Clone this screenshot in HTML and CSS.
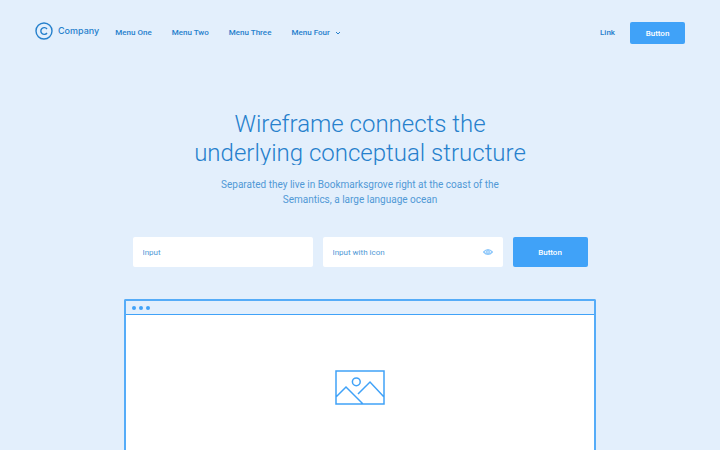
FILE: index.html
```html
<!DOCTYPE html>
<html lang="en">
<head>
<meta charset="utf-8">
<meta name="viewport" content="width=device-width, initial-scale=1">
<title>Company</title>
<link rel="stylesheet" href="styles.css">
</head>
<body>
<header class="header">
  <a class="brand" href="#">
    <svg class="brand-mark" viewBox="0 0 18 18" aria-hidden="true"><circle cx="9" cy="9" r="8"/><path d="M12 7A3.400 3.400 0 1 0 12 11"/></svg>
    <span>Company</span>
  </a>
  <nav class="menu" aria-label="Main">
    <a href="#">Menu One</a>
    <a href="#">Menu Two</a>
    <a href="#">Menu Three</a>
    <a class="menu-drop" href="#">Menu Four
      <svg class="chevron" viewBox="0 0 6 4" aria-hidden="true"><path d="M1 1L3 3L5 1"/></svg></a>
  </nav>
  <div class="actions">
    <a href="#">Link</a>
    <button class="button button-small" type="button">Button</button>
  </div>
</header>
<main class="hero">
  <h1 class="title">Wireframe connects the<br>underlying conceptual structure</h1>
  <p class="lead">Separated they live in Bookmarksgrove right at the coast of the<br>Semantics, a large language ocean</p>
  <form class="form">
    <div class="field"><input type="text" placeholder="Input" aria-label="Input"></div>
    <div class="field">
      <input type="text" placeholder="Input with icon" aria-label="Input with icon">
      <svg class="eye" viewBox="0 0 10 6" aria-hidden="true"><path d="M.6 3Q5-1.600 9.400 3Q5 7.600 .6 3Z"/><circle cx="5" cy="3" r="1.300"/></svg>
    </div>
    <button class="button" type="button">Button</button>
  </form>
  <section class="browser" aria-label="Preview">
    <div class="browser-bar"><i></i><i></i><i></i></div>
    <div class="browser-body">
      <svg class="picture" viewBox="0 0 50 35" aria-hidden="true"><path d="M1 1H49V34H1ZM1 27L11 17L28 34M23 24L35 12L49 27"/><circle cx="21.300" cy="11.800" r="3.900"/></svg>
    </div>
  </section>
</main>
</body>
</html>
```
FILE: styles.css
```css
* {
  box-sizing: border-box;
}

body {
  margin: 0;
  min-height: 100vh;
  display: flex;
  flex-direction: column;
  overflow: hidden;
  background: #e3effc;
  color: #2680cc;
  font-family: Roboto, "Liberation Sans", sans-serif;
  font-size: 8px;
  font-weight: 500;
  line-height: 12px;
}

a {
  color: inherit;
  text-decoration: none;
}

svg {
  display: block;
  fill: none;
  stroke: currentColor;
}

.header {
  display: flex;
  align-items: center;
  padding: 22px 35px 0;
}

.brand {
  display: flex;
  align-items: center;
  gap: 5px;
  padding-bottom: 4px;
  font-family: Inter, sans-serif;
  font-size: 9px;
}

.brand-mark {
  width: 18px;
  height: 18px;
  stroke-width: 1.4;
}

.menu {
  display: flex;
  gap: 20px;
  margin-left: 16px;
}

.menu-drop {
  display: flex;
  align-items: center;
  gap: 5px;
}

.chevron {
  width: 6px;
  height: 4px;
}

.actions {
  display: flex;
  align-items: center;
  gap: 15px;
  margin-left: auto;
}

.button {
  width: 75px;
  height: 30px;
  padding: 1px 0 0;
  border: 0;
  border-radius: 2px;
  background: #40a2f8;
  color: #fff;
  font: inherit;
}

.button-small {
  width: 55px;
  height: 22px;
}

.hero {
  flex: 1;
  display: flex;
  flex-direction: column;
  align-items: center;
  text-align: center;
}

.title {
  margin: 66px 0 0;
  height: 55px;
  overflow: hidden;
  font-size: 24px;
  font-weight: 300;
  line-height: 29px;
}

.lead {
  margin: 12px 0 0;
  color: #5199d6;
  font-size: 10px;
  font-weight: 400;
  line-height: 15px;
}

.form {
  display: flex;
  gap: 10px;
  margin-top: 30px;
}

.field {
  position: relative;
  width: 180px;
}

.field input {
  width: 100%;
  height: 30px;
  padding: 0 10px;
  border: 0;
  border-radius: 2px;
  background: #fff;
  color: #5199d6;
  font: inherit;
  font-weight: 400;
}

.field input::placeholder {
  color: #5199d6;
  opacity: 1;
}

.eye {
  position: absolute;
  top: 12px;
  right: 10px;
  width: 10px;
  height: 6px;
  color: #8cc7fb;
  stroke-width: 1.3;
}

.browser {
  flex: 1;
  display: flex;
  flex-direction: column;
  width: 472px;
  max-width: 100%;
  margin-top: 32px;
  border: 2px solid #55acf8;
  border-bottom: 0;
  border-radius: 2px 2px 0 0;
  color: #40a2f8;
}

.browser-bar {
  display: flex;
  align-items: center;
  gap: 3px;
  height: 14px;
  padding: 0 6px;
  border-bottom: 1px solid;
}

.browser-bar i {
  width: 4px;
  height: 4px;
  border-radius: 50%;
  background: currentColor;
}

.browser-body {
  flex: 1;
  display: flex;
  justify-content: center;
  padding-top: 55px;
  background: #fff;
}

.picture {
  width: 50px;
  height: 35px;
  stroke-width: 1.5;
}
```
